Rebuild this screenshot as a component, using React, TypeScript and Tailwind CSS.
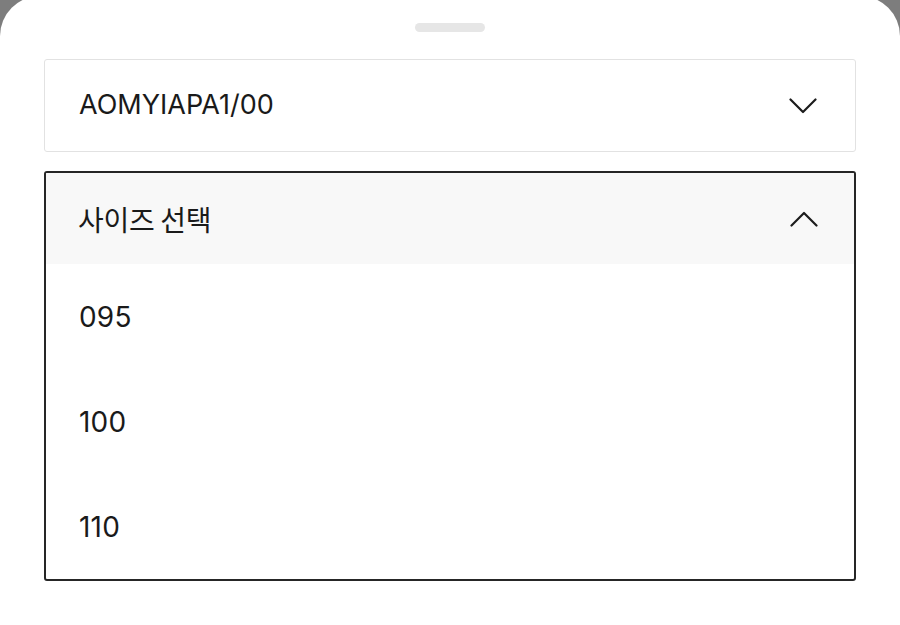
import React from "react";

const Chevron = ({ up = false }: { up?: boolean }) => (
  <svg width="28" height="16" viewBox="0 0 28 16" fill="none" className="shrink-0">
    <polyline
      points={up ? "1.5,14.5 14,2 26.5,14.5" : "1.5,1.5 14,14 26.5,1.5"}
      stroke="#1c1c1c"
      strokeWidth="2.2"
      strokeLinecap="round"
      strokeLinejoin="round"
    />
  </svg>
);

export default function App() {
  const options = ["095", "100", "110"];
  return (
    <div className="w-[900px] h-[625px] bg-[#7d7d7d] overflow-hidden">
      <div
        className="mt-[-4px] h-[629px] bg-white rounded-t-[40px] flex flex-col items-center"
        style={{ fontFamily: "Inter, 'Noto Sans CJK KR', sans-serif" }}
      >
        <div className="mt-[27px] w-[70px] h-[9px] rounded-full bg-[#e6e6e6]" />
        <div className="mt-[27px] w-[812px] h-[93px] border border-[#e2e2e2] rounded-[3px] flex items-center justify-between pl-[34px] pr-[38px]">
          <span className="text-[27px] text-[#1a1a1a]">AOMYIAPA1/00</span>
          <Chevron />
        </div>
        <div className="mt-[19px] w-[812px] border-2 border-[#262626] rounded-[3px] overflow-hidden flex flex-col">
          <div className="h-[91px] bg-[#f8f8f8] flex items-center justify-between pl-[32px] pr-[36px]">
            <span
              className="text-[28px] text-[#1a1a1a] font-normal tracking-[-0.3px]"
              style={{ fontFamily: "'Noto Sans CJK KR', sans-serif" }}
            >
              사이즈 선택
            </span>
            <Chevron up />
          </div>
          {options.map((o) => (
            <div key={o} className="h-[105px] flex items-center pl-[33px]">
              <span className="text-[28px] text-[#1a1a1a] tracking-[0.2px]">{o}</span>
            </div>
          ))}
        </div>
      </div>
    </div>
  );
}
